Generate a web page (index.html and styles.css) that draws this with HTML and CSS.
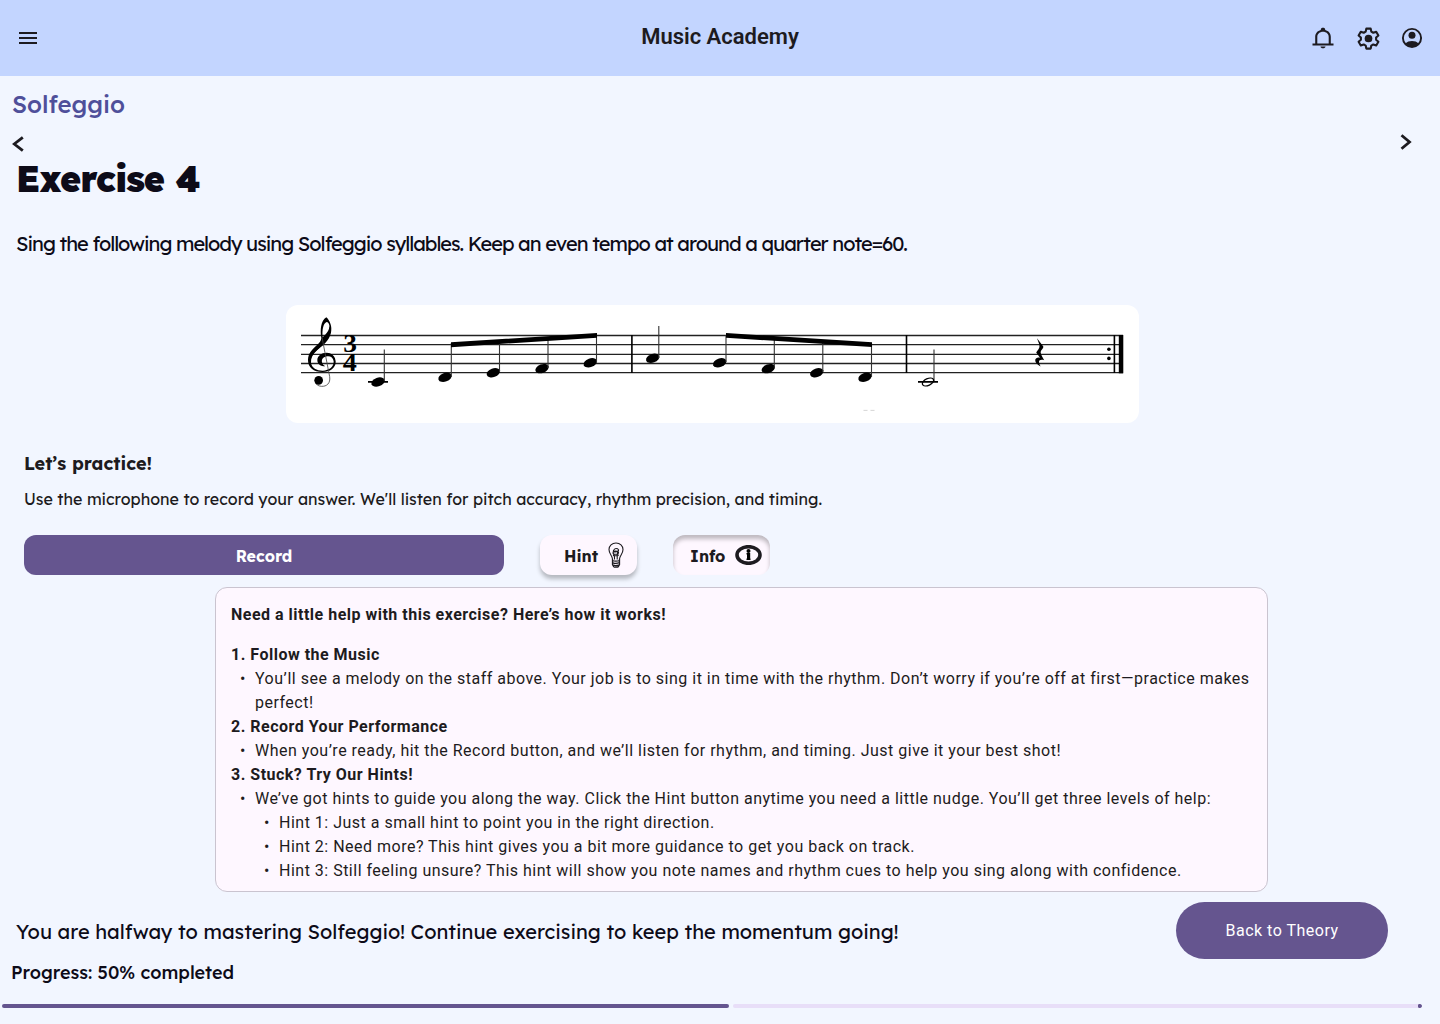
FILE: index.html
```html
<!DOCTYPE html>
<html lang="en">
<head>
<meta charset="utf-8">
<title>Music Academy</title>
<link rel="stylesheet" href="styles.css">
</head>
<body>
<header class="topbar">
  <svg class="icon menu" viewBox="0 0 24 24"><path d="M3 18h18v-2H3v2zm0-5h18v-2H3v2zm0-7v2h18V6H3z"/></svg>
  <h1 class="brand">Music Academy</h1>
  <div class="actions">
    <svg class="icon bell" viewBox="0 0 24 24"><path d="M1.500 18.400v-2h2.700V10c0-3.500 2.300-6.100 5.600-6.900v-.7C9.800 1.400 10.700.8 12 .8s2.200.6 2.200 1.600v.7c3.300.8 5.600 3.400 5.600 6.900v6.400h2.700v2H1.500zm4.800-2h11.400V10c0-3-2.400-5.200-5.700-5.200S6.300 7 6.300 10v6.400zM9.500 19.400h5c0 1.100-1.100 1.800-2.500 1.800s-2.500-.7-2.500-1.800z"/></svg>
    <svg class="icon gear" viewBox="0 0 24 24"><path fill="none" stroke="#1d1b20" stroke-width="2" stroke-linejoin="round" d="M9.900 2.500h4.200l.6 2.900 1.900 1.100 2.800-1 2.100 3.600-2.200 1.900v2.200l2.200 1.900-2.100 3.600-2.800-1-1.900 1.100-.6 2.900H9.900l-.6-2.900-1.900-1.100-2.800 1-2.100-3.600 2.200-1.900v-2.200L2.500 9.100l2.100-3.600 2.800 1 1.900-1.100z"/><circle cx="12" cy="12" r="3.700"/></svg>
    <svg class="icon user" viewBox="0 0 24 24"><circle cx="12" cy="12" r="9.100" fill="none" stroke="#1d1b20" stroke-width="1.900"/><circle cx="12" cy="9.300" r="3.500"/><path d="M5.300 17.600c1.800-1.700 4-2.500 6.700-2.500s4.900.8 6.700 2.500C17 19.800 14.700 21 12 21s-5-1.200-6.700-3.400z"/></svg>
  </div>
</header>
<main>
  <h2 class="course">Solfeggio</h2>
  <nav class="pager">
    <svg class="chevron prev" viewBox="0 0 12 16"><path d="M10.800 1.300 2.300 8l8.500 6.700"/></svg>
    <svg class="chevron next" viewBox="0 0 12 16"><path d="m1.500 1.300 8 6.700-8 6.700"/></svg>
  </nav>
  <h3 class="exercise">Exercise 4</h3>
  <p class="task">Sing the following melody using Solfeggio syllables. Keep an even tempo at around a quarter note=60.</p>

  <figure class="score">
    <svg viewBox="286 305 853 118" width="853" height="118">
      <path stroke="#222" stroke-width="1.300" d="M301 335.500H1123M301 344.600H1123M301 354.400H1123M301 363.500H1123M301 372.700H1123"/>
      <g transform="translate(280 300) scale(.3333)">
        <path fill-rule="evenodd" d="M139 52C150 62 157 80 153 98C148 122 128 136 112 150C98 162 92 175 93 188C95 204 110 212 128 212C148 212 162 200 161 184C160 174 152 168 142 169C130 170 124 178 126 187C127 193 131 196 136 199C122 199 112 192 112 180C112 168 124 158 140 158C156 158 167 170 167 186C167 204 150 216 128 216C100 216 84 202 84 180C84 160 96 148 112 134C120 127 123 122 124 115C120 90 122 62 139 52ZM140 66C130 70 126 88 128 112C140 102 150 88 148 76C147 70 144 66 140 66Z"/>
        <path fill="none" stroke="#000" stroke-width="4" d="M151 80C152 110 128 134 108 150C92 164 87 176 89 190"/>
        <path fill="none" stroke="#000" stroke-width="3" d="M140 161C154 161 164 172 164 186"/>
        <path fill="none" stroke="#444" stroke-width="2.500" d="M126 112 149 230C152 250 140 260 124 259C114 258 108 254 106 246"/>
        <circle cx="116" cy="241" r="13"/>
      </g>
      <g class="meter"><text transform="translate(350 352.200) scale(1.120 1)">3</text><text transform="translate(349.800 371.300) scale(1.150 1)">4</text></g>
      <defs><ellipse id="head" rx="6.900" ry="4.300" transform="rotate(-20)"/></defs>
      <use href="#head" x="378" y="382"/><use href="#head" x="445" y="377.300"/><use href="#head" x="493.300" y="372.700"/><use href="#head" x="542" y="368.600"/><use href="#head" x="590.300" y="362.800"/><use href="#head" x="652.700" y="358.300"/><use href="#head" x="719.700" y="362.800"/><use href="#head" x="768.300" y="368.600"/><use href="#head" x="816.700" y="372.700"/><use href="#head" x="865" y="377.300"/>
      <path stroke="#333" stroke-width="1.100" d="M384.300 349.500V381M451.300 343V377M499.500 343V372M548 340V368M596.500 335V362M658.800 326V358M726 335V362M774.300 338V368M822.800 342V372M871.500 343V377M934 349.500V381"/>
      <path d="M451 342.300 597 333v4.700L451 347.200zM726 333l146 9.300v4.800L726 337.700z"/>
      <path stroke="#000" stroke-width="1.600" d="M368 381.900h20M918 381.900h20M631.900 335v38M906.500 335v38M1114.400 335v38"/>
      <ellipse rx="6" ry="3.400" transform="translate(928 382) rotate(-24)" fill="none" stroke="#000" stroke-width="1.300"/>
      <path d="M1118.800 335h4.500v38.300h-4.500z"/>
      <circle cx="1108.900" cy="349.300" r="1.800"/><circle cx="1108.900" cy="358.400" r="1.800"/>
      <path d="M1037 338.300l6.300 8.300c.4 2-3 4-2.600 6.200.2 2 1.800 4.200 3.500 7.400-2.900-.8-5.500-.3-5.200 2 .2 1.700 1 2.800 1.600 4.200-3.400-1.600-5.500-4.500-5.400-6.500.3-2 3-3 5-2l-4-5.400c1-2 3.600-4 3.300-6.500-.2-2.400-1.600-5-2.500-7.700z"/>
      <path stroke="#ccc" stroke-width=".8" d="M863.500 410.400h4M870.500 410.400h4"/>
    </svg>
  </figure>

  <section class="practice">
    <h4 class="practice-title">Let’s practice!</h4>
    <p class="practice-text">Use the microphone to record your answer. We'll listen for pitch accuracy, rhythm precision, and timing.</p>
    <div class="buttons">
      <button class="record">Record</button>
      <button class="chip hint">Hint
        <svg viewBox="0 0 16 26" width="16" height="26"><g fill="none" stroke="#1d1b20" stroke-width="1.100"><path d="M4.500 17C4.300 13.500 1 12 1 7.500 1 3.700 4 1 8 1s7 2.700 7 6.500c0 4.500-3.300 6-3.500 9.500"/><path d="M6.500 17.500c0-3 .3-3.500-.8-5.200C4.500 10.500 5.500 6.500 8 6.500s3.500 2 1.500 3-4.500-.5-4.500 1.500 5 1.500 5.500 0-3-2.500-5-1.500M10.800 7.500c-2 3-1.500 6-1.600 10M5 13.400c2 .6 4 .3 6-.4"/><path stroke-width="1.300" d="M4.300 18.500c2 .8 5 .8 7.400 0M5 20.800c2 .8 4.500.6 6.500-.3M5.200 23.200c2 .7 4 .5 6-.4M6 25.200h4M4.500 17v5.500L6 25.200M11.500 17v5.500L10 25.200"/></g></svg>
      </button>
      <button class="chip info">Info
        <svg viewBox="0 0 27 20" width="27" height="20"><ellipse cx="13.500" cy="10" rx="11.500" ry="8.300" fill="none" stroke="#1d1b20" stroke-width="3.600"/><circle cx="13.500" cy="6.100" r="2"/><path d="M12 8h3.200v5.600h.3v1.300h-4v-1.300h.5V9.400h-.5V8z"/></svg>
      </button>
    </div>
  </section>

  <section class="help">
    <p class="lead"><b>Need a little help with this exercise? Here’s how it works!</b></p>
    <p><b>1. Follow the Music</b></p>
    <ul><li>You’ll see a melody on the staff above. Your job is to sing it in time with the rhythm. Don’t worry if you’re off at first—practice makes perfect!</li></ul>
    <p><b>2. Record Your Performance</b></p>
    <ul><li>When you’re ready, hit the Record button, and we’ll listen for rhythm, and timing. Just give it your best shot!</li></ul>
    <p><b>3. Stuck? Try Our Hints!</b></p>
    <ul><li>We’ve got hints to guide you along the way. Click the Hint button anytime you need a little nudge. You’ll get three levels of help:
      <ul><li>Hint 1: Just a small hint to point you in the right direction.</li><li>Hint 2: Need more? This hint gives you a bit more guidance to get you back on track.</li><li>Hint 3: Still feeling unsure? This hint will show you note names and rhythm cues to help you sing along with confidence.</li></ul>
    </li></ul>
  </section>

  <footer class="footer">
    <div class="status">
      <p class="cheer">You are halfway to mastering Solfeggio! Continue exercising to keep the momentum going!</p>
      <p class="percent">Progress: 50% completed</p>
    </div>
    <button class="back">Back to Theory</button>
  </footer>
  <div class="progress"><span class="done"></span><span class="rest"></span></div>
</main>
</body>
</html>
```
FILE: styles.css
```css
* { box-sizing: border-box; margin: 0; padding: 0; }
body {
  height: 1024px;
  background: #f2f6ff;
  color: #1d1b20;
  font-family: Lexend, Inter, sans-serif;
  overflow: hidden;
}
svg { display: block; flex: none; }
button { border: 0; font: inherit; color: inherit; }

.topbar {
  display: grid;
  grid-template-columns: 1fr auto 1fr;
  align-items: center;
  height: 76px;
  padding: 0 16px;
  background: #c3d5ff;
}
.icon { width: 24px; height: 24px; fill: #1d1b20; }
.brand { font: 600 22px/28px Roboto, sans-serif; padding-bottom: 3px; }
.actions { display: flex; align-items: center; justify-content: flex-end; }
.bell { margin: 2px 21px 0 0; }
.gear { width: 25px; height: 25px; margin: 1px 19px 0 0; }

.course { height: 60px; padding: 10px 12px 0; font-size: 24px; line-height: 36px; font-weight: 500; color: #4f4f9a; }
.pager { display: flex; justify-content: space-between; height: 18px; padding: 0 28px 0 12px; }
.chevron { width: 12px; height: 16px; fill: none; stroke: #1d1b20; stroke-width: 2.800; }
.next { margin-top: -2px; }
.exercise { height: 74px; padding: 2px 16px 0; font-size: 36px; line-height: 46px; font-weight: 900; letter-spacing: -1px; color: #0d0b18; }
.task { height: 77px; padding: 2px 16px 0; font-size: 20px; line-height: 28px; letter-spacing: -1px; white-space: nowrap; color: #0d0b18; }

.score { width: 853px; height: 118px; margin-left: 286px; background: #fff; border-radius: 12px; }
.meter { font: 700 24.500px "Liberation Serif", serif; text-anchor: middle; }

.practice { padding: 28px 24px 0; height: 164px; }
.practice-title { font-size: 18px; line-height: 26px; font-weight: 700; }
.practice-text { margin-top: 10px; font-size: 16px; line-height: 24px; white-space: nowrap; }
.buttons { display: flex; margin-top: 24px; height: 40px; font-size: 16px; font-weight: 700; }
.record { width: 480px; padding-top: 1px; border-radius: 12px; background: #65558f; color: #fff; }
.chip { display: flex; align-items: center; padding-top: 1px; border-radius: 12px; background: #fef7ff; }
.chip svg { margin-top: -2px; }
.hint { width: 97px; margin-left: 36px; padding-left: 24px; gap: 10px; box-shadow: 0 4px 4px rgba(0, 0, 0, .25); }
.info { width: 97px; margin-left: 36px; padding-left: 17px; gap: 10px; box-shadow: inset 0 4px 4px rgba(0, 0, 0, .25); }

.help {
  width: 1053px;
  height: 305px;
  margin-left: 215px;
  padding: 15px;
  border: 1px solid #cac4d0;
  border-radius: 12px;
  background: #fef7ff;
  font: 400 16px/24px Roboto, sans-serif;
  letter-spacing: .496px;
}
.lead { margin-bottom: 16px; }
.help ul { padding-left: 24px; list-style: none; }
.help li::before { content: "•"; float: left; width: 15px; margin-left: -15px; font-size: 16px; }

.footer { display: flex; justify-content: space-between; height: 112px; padding: 10px 52px 0 11px; color: #0d0b18; }
.cheer { padding: 15px 5px 0; font-size: 20px; line-height: 30px; white-space: nowrap; }
.percent { margin-top: 13px; font-size: 18px; line-height: 26px; font-weight: 500; }
.back { width: 212px; height: 57px; border-radius: 28.500px; background: #65558f; color: #fff; font: 400 16px/24px Roboto, sans-serif; letter-spacing: .5px; }

.progress { display: flex; gap: 4px; height: 4px; padding: 0 18px 0 2px; }
.done { width: 727px; border-radius: 2px; background: #65558f; }
.rest { flex: 1; border-radius: 2px; background: radial-gradient(circle at calc(100% - 2px) 2px, #65558f 2px, transparent 2.300px), #e8def8; }
```
